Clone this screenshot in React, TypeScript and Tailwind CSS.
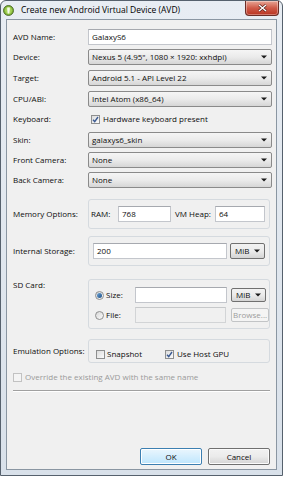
import React from "react";

const font = "font-['Open_Sans','Liberation_Sans',sans-serif]";

function Arrow() {
  return (
    <svg width="6" height="4" viewBox="0 0 6 4" className="shrink-0">
      <path d="M0 0.5h6L3 3.5z" fill="#1a1a1a" />
    </svg>
  );
}

function Select({ value, className = "" }: { value: string; className?: string }) {
  return (
    <div
      className={`flex h-[16px] items-center justify-between rounded-[2px] border border-[#8a8a8a] bg-linear-to-b from-[#f5f5f5] via-[#ebebeb] to-[#d6d6d6] pl-[3px] pr-[4px] ${className}`}
    >
      <span className="whitespace-nowrap leading-[12px]">{value}</span>
      <Arrow />
    </div>
  );
}

function Input({ value = "", className = "", disabled = false }: { value?: string; className?: string; disabled?: boolean }) {
  return (
    <div
      className={`flex h-[16px] items-center border border-[#c3c6cc] border-t-[#a6a9af] pl-[3px] leading-[12px] ${disabled ? "bg-[#f0f0f0]" : "bg-white"} ${className}`}
    >
      {value}
    </div>
  );
}

function Check({ checked = false, disabled = false }: { checked?: boolean; disabled?: boolean }) {
  return (
    <span
      className={`flex h-[9px] w-[9px] shrink-0 items-center justify-center border ${disabled ? "border-[#c2c2c2] bg-[#f4f4f4]" : "border-[#8e8f8f] bg-linear-to-br from-[#dcdcdc] to-[#fbfbfb]"}`}
    >
      {checked && (
        <svg width="7" height="7" viewBox="0 0 7 7">
          <path d="M1 3.8L2.7 5.6L6 1" stroke="#3b5a92" strokeWidth="1.4" fill="none" />
        </svg>
      )}
    </span>
  );
}

function Radio({ checked = false }: { checked?: boolean }) {
  return (
    <span className="flex h-[9px] w-[9px] shrink-0 items-center justify-center rounded-full border border-[#8e8f8f] bg-linear-to-br from-[#d8d8d8] to-[#fafafa]">
      {checked && <span className="h-[5px] w-[5px] rounded-full bg-linear-to-br from-[#6fa6d6] to-[#1d4f86]" />}
    </span>
  );
}

function Row({ label, children, className = "" }: { label: string; children: React.ReactNode; className?: string }) {
  return (
    <div className={`flex h-[16px] items-center ${className}`}>
      <span className="w-[75px] shrink-0">{label}</span>
      <div className="flex-1">{children}</div>
    </div>
  );
}

function Button({ label, primary = false, disabled = false, className = "" }: { label: string; primary?: boolean; disabled?: boolean; className?: string }) {
  return (
    <div
      className={`flex items-center justify-center rounded-[2px] border leading-[12px] ${
        primary
          ? "border-[#3c7fb1] bg-linear-to-b from-[#eaf6fd] to-[#bee6fd] shadow-[inset_0_0_0_1px_#ffffff]"
          : disabled
            ? "border-[#c2c4c6] bg-[#f4f4f4] text-[#9c9c9c]"
            : "border-[#707070] bg-linear-to-b from-[#f2f2f2] via-[#ebebeb] to-[#d4d4d4] shadow-[inset_0_0_0_1px_#fbfbfb]"
      } ${className}`}
    >
      {label}
    </div>
  );
}

export default function App() {
  return (
    <div className={`h-[479px] w-[284px] bg-white text-[8px] leading-[12px] text-[#0d0d0d] ${font}`}>
      <div className="flex h-[476px] w-[283px] flex-col rounded-t-[6px] border border-[#56616d] bg-linear-to-b from-[#e8edf3] to-[#d9e1ea]">
        <div className="flex h-[18px] items-start justify-between">
          <div className="flex items-center pl-[2px] pt-[3px]">
            <svg width="11" height="11" viewBox="0 0 11 11">
              <circle cx="5.5" cy="5.5" r="5" fill="#7fb236" stroke="#3c5a1c" strokeWidth="0.8" />
              <circle cx="5.5" cy="5.5" r="3.4" fill="#a6d35a" />
              <path d="M4.2 2.6h2.6v2.2l-0.5 3.6h-1.6l-0.5-3.6z" fill="#f4fbe7" />
            </svg>
            <span className="ml-[7px] text-[8.5px] leading-[12px] text-black">Create new Android Virtual Device (AVD)</span>
          </div>
          <div className="mr-[3px] flex h-[15px] w-[34px] items-center justify-center rounded-b-[4px] border border-t-0 border-[#6b2d26] bg-linear-to-b from-[#e6a596] via-[#cf5a48] to-[#b8321f] shadow-[inset_0_0_0_1px_rgba(255,255,255,0.35)]">
            <svg width="9" height="8" viewBox="0 0 9 8">
              <path d="M1 1L8 7M8 1L1 7" stroke="#4a1510" strokeWidth="2.6" />
              <path d="M1 1L8 7M8 1L1 7" stroke="#ffffff" strokeWidth="1.5" />
            </svg>
          </div>
        </div>

        <div className="mx-[5px] mb-[5px] flex flex-1 flex-col border border-[#8a96a2] bg-[#f0f0f0] pl-[6px] pr-[4px] pt-[9px] pb-[4px]">
          <Row label="AVD Name:">
            <Input value="GalaxyS6" />
          </Row>
          <Row label="Device:" className="mt-[4px]">
            <Select value={'Nexus 5 (4.95", 1080 × 1920: xxhdpi)'} />
          </Row>
          <Row label="Target:" className="mt-[5px]">
            <Select value="Android 5.1 - API Level 22" />
          </Row>
          <Row label="CPU/ABI:" className="mt-[5px]">
            <Select value="Intel Atom (x86_64)" />
          </Row>
          <Row label="Keyboard:" className="mt-[4px]">
            <div className="flex items-center pl-[3px]">
              <Check checked />
              <span className="ml-[3px]">Hardware keyboard present</span>
            </div>
          </Row>
          <Row label="Skin:" className="mt-[5px]">
            <Select value="galaxys6_skin" />
          </Row>
          <Row label="Front Camera:" className="mt-[4px]">
            <Select value="None" />
          </Row>
          <Row label="Back Camera:" className="mt-[4px]">
            <Select value="None" />
          </Row>

          <div className="mt-[11px] flex h-[30px] items-center">
            <span className="w-[75px] shrink-0">Memory Options:</span>
            <div className="flex h-full w-[182px] items-center rounded-[3px] border border-[#d5dadf] pl-[2px]">
              <span className="w-[27px]">RAM:</span>
              <Input value="768" className="w-[53px]" />
              <span className="ml-[4px] w-[40px]">VM Heap:</span>
              <Input value="64" className="w-[50px]" />
            </div>
          </div>

          <div className="mt-[7px] flex h-[30px] items-center">
            <span className="w-[75px] shrink-0">Internal Storage:</span>
            <div className="flex h-full w-[182px] items-center rounded-[3px] border border-[#d5dadf] pl-[4px]">
              <Input value="200" className="w-[134px]" />
              <div className="ml-[3px] flex h-[16px] w-[35px] items-center justify-between rounded-[2px] border border-[#707070] bg-linear-to-b from-[#f2f2f2] via-[#ebebeb] to-[#d4d4d4] px-[4px]">
                <span>MiB</span>
                <Arrow />
              </div>
            </div>
          </div>

          <div className="mt-[13px] flex h-[50px] items-start">
            <span className="w-[75px] shrink-0">SD Card:</span>
            <div className="flex h-full w-[182px] flex-col rounded-[3px] border border-[#d5dadf] pl-[6px] pt-[8px]">
              <div className="flex h-[14px] items-center">
                <Radio checked />
                <span className="ml-[2px] w-[29px]">Size:</span>
                <Input value="" className="h-[14px] w-[92px]" />
                <div className="ml-[4px] flex h-[14px] w-[35px] items-center justify-between rounded-[2px] border border-[#707070] bg-linear-to-b from-[#f2f2f2] via-[#ebebeb] to-[#d4d4d4] px-[4px]">
                  <span>MiB</span>
                  <Arrow />
                </div>
              </div>
              <div className="mt-[6px] flex h-[14px] items-center">
                <Radio />
                <span className="ml-[2px] w-[29px]">File:</span>
                <Input value="" disabled className="h-[14px] w-[92px] border-[#d2d4d6] border-t-[#c6c8ca]" />
                <Button label="Browse..." disabled className="ml-[5px] h-[14px] w-[38px]" />
              </div>
            </div>
          </div>

          <div className="mt-[10px] flex h-[24px] items-center">
            <span className="w-[75px] shrink-0">Emulation Options:</span>
            <div className="flex h-full w-[182px] items-center rounded-[3px] border border-[#d5dadf] pl-[7px] pt-[6px]">
              <Check />
              <span className="ml-[2px] w-[58px]">Snapshot</span>
              <Check checked />
              <span className="ml-[3px]">Use Host GPU</span>
            </div>
          </div>

          <div className="mt-[8px] flex items-center text-[#9a9a9a]">
            <Check disabled />
            <span className="ml-[3px]">Override the existing AVD with the same name</span>
          </div>
          <div className="mt-[7px] mr-[2px] h-[2px] border-t border-b border-t-[#a0a0a0] border-b-white" />

          <div className="mt-auto flex justify-end gap-[6px] pr-[2px]">
            <Button label="OK" primary className="h-[17px] w-[62px]" />
            <Button label="Cancel" className="h-[17px] w-[62px]" />
          </div>
        </div>
      </div>
    </div>
  );
}
